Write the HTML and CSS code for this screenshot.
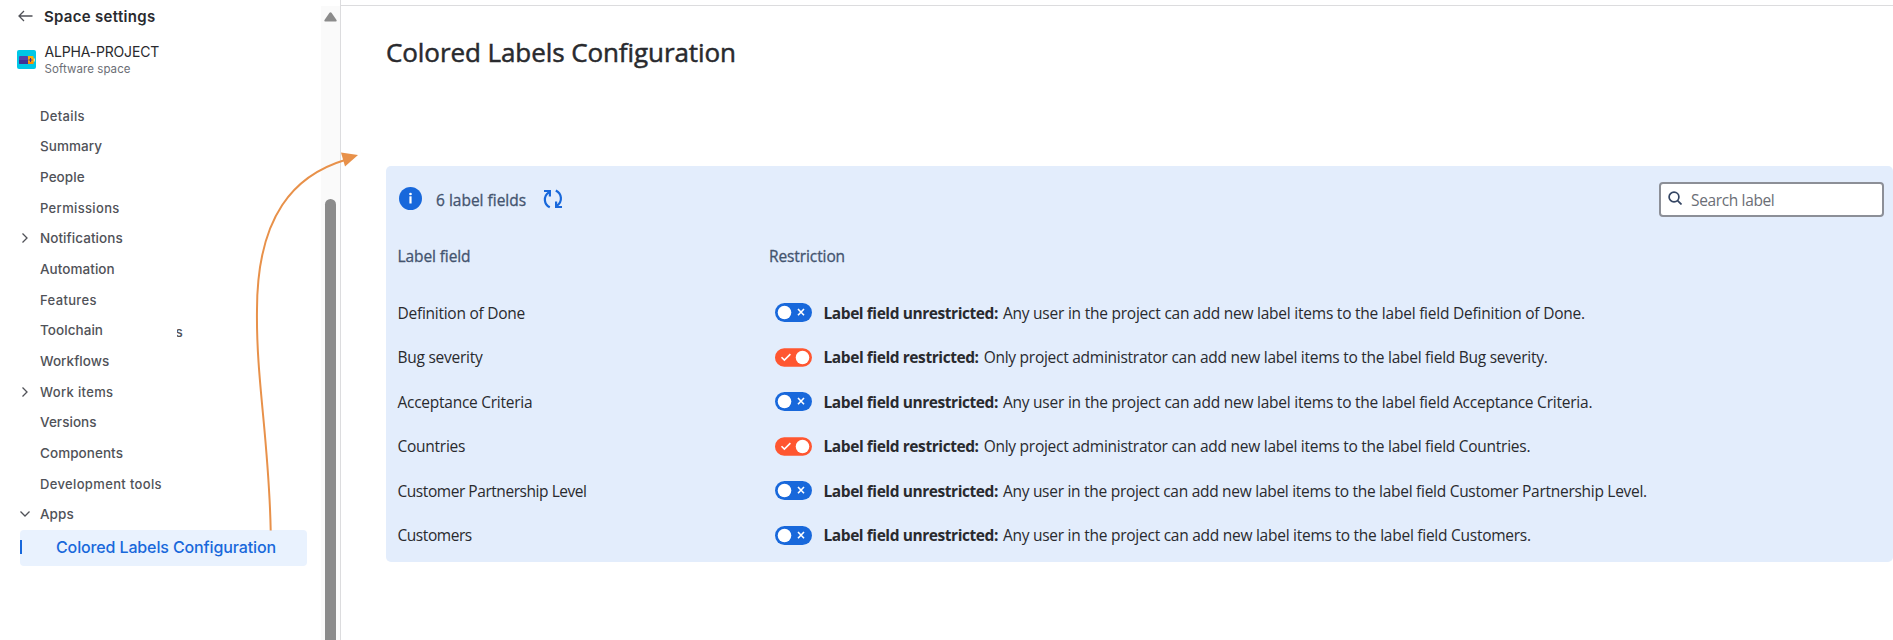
FILE: index.html
```html
<!DOCTYPE html>
<html lang="en">
<head>
<meta charset="utf-8">
<title>Colored Labels Configuration</title>
<link rel="stylesheet" href="styles.css">
</head>
<body>
<svg class="defs" width="0" height="0" aria-hidden="true">
  <symbol id="off" viewBox="0 0 37 19"><rect width="37" height="19" rx="9.5" fill="#1868db"/><circle cx="9.5" cy="9.5" r="6.8" fill="#fff"/><path d="M23 6l6 6.200M29 6l-6 6.200" stroke="#fff" stroke-width="1.600"/></symbol>
  <symbol id="on" viewBox="0 0 37 19"><rect y=".3" width="37" height="18.400" rx="9.200" fill="#ff5630"/><circle cx="27.500" cy="9.500" r="6.800" fill="#fff"/><path d="M6.500 9.200l2.900 2.900 6-6" fill="none" stroke="#fff" stroke-width="1.600"/></symbol>
  <symbol id="chev" viewBox="0 0 12 12"><path d="M3.500 1.500l4.500 4.500-4.500 4.500" fill="none" stroke="#505258" stroke-width="1.300"/></symbol>
</svg>
<div class="app">
  <aside class="sidebar">
    <div class="side">
      <div class="back">
        <svg width="15" height="12" viewBox="0 0 15 12"><path d="M14.500 6H1.200M6 1L1 6l5 5" fill="none" stroke="#505258" stroke-width="1.300"/></svg>
        <span>Space settings</span>
      </div>
      <div class="space">
        <svg width="19" height="19" viewBox="0 0 19 19"><rect width="19" height="19" rx="2" fill="#00c7e6"/><rect x="2" y="6" width="9" height="8" rx="1" fill="#5243aa"/><path d="M2 10h9v4H3q-1 0-1-1z" fill="#403294"/><path d="M11 6h4.500q1 0 1 1v1.500h.9v3h-.9V13q0 1-1 1H11z" fill="#ffab00"/><path d="M11 12h5.500v1q0 1-1 1H11z" fill="#ff8b00"/><path d="M17.300 8.500v3" stroke="#ffe8b0"/><path d="M13.500 8v4M11.500 10h4" stroke="#403294" stroke-width="1.100"/></svg>
        <div class="title"><div class="name">ALPHA-PROJECT</div><div class="kind">Software space</div></div>
      </div>
      <nav class="nav">
        <div class="item wide">Details</div>
        <div class="item">Summary</div>
        <div class="item">People</div>
        <div class="item wide">Permissions</div>
        <div class="item"><svg class="chev"><use href="#chev"/></svg>Notifications</div>
        <div class="item">Automation</div>
        <div class="item wide">Features</div>
        <div class="item">Toolchain<span class="stray"><span>s</span></span></div>
        <div class="item">Workflows</div>
        <div class="item wide"><svg class="chev"><use href="#chev"/></svg>Work items</div>
        <div class="item">Versions</div>
        <div class="item">Components</div>
        <div class="item wide">Development tools</div>
        <div class="item"><svg class="chev open"><use href="#chev"/></svg>Apps</div>
      </nav>
      <div class="selected"><span>Colored Labels Configuration</span></div>
    </div>
    <div class="scroll">
      <svg width="13" height="10" viewBox="0 0 13 10"><path d="M5.500 .8q1-1.200 2 0L12.500 8q.6 1.500-.6 1.500H1.100Q-.1 9.500.5 8z" fill="#8b8b8b"/></svg>
      <div class="thumb"></div>
    </div>
  </aside>
  <main class="main">
    <h1>Colored Labels Configuration</h1>
    <section class="panel">
      <div class="toolbar">
        <svg class="info" width="23" height="23" viewBox="0 0 23 23"><circle cx="11.500" cy="11.500" r="11.500" fill="#1868db"/><circle cx="11.500" cy="7" r="1.350" fill="#fff"/><path d="M11.500 9.300v7.200" stroke="#fff" stroke-width="2.200"/></svg>
        <span class="count">6 label fields</span>
        <svg class="sync" width="20" height="20" viewBox="0 0 20 20"><g fill="none" stroke="#1868db" stroke-width="2.200"><path d="M6.800 18.300C1 15.500 -.2 7.500 6 3.200M1 2h5.900v5.600"/><path d="M12.800 1.500C18.800 4.500 20 12.500 13.800 16.800M19 18h-5.900v-5.600"/></g></svg>
        <div class="search">
          <svg width="14" height="14" viewBox="0 0 14 14"><g fill="none" stroke="#344563" stroke-width="1.700"><circle cx="6" cy="6" r="4.900"/><path d="M9.600 9.600l3.900 3.900"/></g></svg>
          <span>Search label</span>
        </div>
      </div>
      <div class="row head"><div>Label field</div><div class="restr">Restriction</div></div>
      <div class="row"><div>Definition of Done</div><svg class="toggle"><use href="#off"/></svg><p><b>Label field unrestricted:</b><span class="t-dod">Any user in the project can add new label items to the label field Definition of Done.</span></p></div>
      <div class="row"><div>Bug severity</div><svg class="toggle"><use href="#on"/></svg><p><b class="short">Label field restricted:</b><span>Only project administrator can add new label items to the label field Bug severity.</span></p></div>
      <div class="row"><div>Acceptance Criteria</div><svg class="toggle"><use href="#off"/></svg><p><b>Label field unrestricted:</b><span class="t-dod">Any user in the project can add new label items to the label field Acceptance Criteria.</span></p></div>
      <div class="row"><div>Countries</div><svg class="toggle"><use href="#on"/></svg><p><b class="short">Label field restricted:</b><span>Only project administrator can add new label items to the label field Countries.</span></p></div>
      <div class="row"><div class="tight">Customer Partnership Level</div><svg class="toggle"><use href="#off"/></svg><p><b>Label field unrestricted:</b><span class="t-cpl">Any user in the project can add new label items to the label field Customer Partnership Level.</span></p></div>
      <div class="row"><div class="tight">Customers</div><svg class="toggle"><use href="#off"/></svg><p><b>Label field unrestricted:</b><span>Any user in the project can add new label items to the label field Customers.</span></p></div>
    </section>
  </main>
  <svg class="arrow" width="380" height="640" viewBox="0 0 380 640"><path d="M270.700 530.500C269 440 256 380 257 310C257 215 295 175 345 160" fill="none" stroke="#e8914a" stroke-width="2"/><path d="M341 152.500L358 155L345 166.500z" fill="#e8914a"/></svg>
</div>
</body>
</html>
```
FILE: styles.css
```css
* { box-sizing: border-box; }
body { margin: 0; background: #fff; font-family: "Open Sans", sans-serif; font-size: 15.5px; color: #292a2e; }
svg { display: block; flex: none; }
.defs { position: absolute; }
.app { position: relative; display: flex; width: 1893px; height: 640px; overflow: hidden; }
.arrow { position: absolute; left: 0; top: 0; }

.sidebar { display: flex; width: 341px; border-right: 1px solid #dcdcde; font-family: Inter, sans-serif; font-weight: 500; }
.side { width: 321px; }
.back { display: flex; align-items: center; height: 32px; padding-left: 17.5px; gap: 11.5px; font-size: 15px; font-weight: 600; letter-spacing: .3px; }
.space { display: flex; align-items: center; height: 54px; padding-left: 17px; gap: 8.5px; }
.title { padding-top: 2px; }
.name { font-size: 14px; font-weight: 400; line-height: 18px; letter-spacing: -.18px; }
.kind { font-size: 11.5px; font-weight: 400; line-height: 16px; letter-spacing: .08px; color: #6b6e76; }
.nav { padding-top: 14.5px; }
.item { display: flex; align-items: center; position: relative; height: 30.65px; padding-left: 40px; font-size: 13.5px; letter-spacing: .05px; color: #505258; }
.wide { font-size: 13px; letter-spacing: .35px; }
.chev { position: absolute; left: 19px; width: 12px; height: 12px; }
.open { transform: rotate(90deg); }
.stray { width: 6px; margin: 3px 0 0 73.5px; overflow: hidden; }
.stray span { display: block; margin-left: -1px; }
.selected { display: flex; align-items: center; width: 287px; height: 36px; margin: .4px 0 0 20px; padding-bottom: 1px; border-radius: 4px; background: #e9f2fe; color: #1868db; font-size: 16px; letter-spacing: -.13px; }
.selected::before { content: ""; width: 2px; height: 14px; margin-right: 34px; background: #1868db; }
.scroll { display: flex; flex-direction: column; align-items: center; width: 19px; margin-top: 6px; padding-top: 6px; background: #fafafa; }
.thumb { width: 11px; flex: 1; margin-top: 177px; border-radius: 6px 6px 0 0; background: #8b8b8b; }

.main { width: 1552px; margin-top: 5px; padding-left: 45px; border-top: 1px solid #dcdcde; }
h1 { margin: 26px 0 0; height: 134px; font-size: 26px; line-height: 40px; font-weight: 400; letter-spacing: -.08px; -webkit-text-stroke: .5px currentColor; }
.panel { height: 396px; padding: 16px 9px 0 11.5px; border-radius: 5px; background: #e3edfc; }
.toolbar { display: flex; align-items: center; height: 35px; padding-left: 1.5px; }
.info { margin-top: -2px; }
.count { margin-left: 14px; color: #44546f; -webkit-text-stroke: .3px currentColor; }
.sync { margin: -2px 0 0 16.5px; }
.search { display: flex; align-items: center; width: 225px; height: 35px; margin-left: auto; padding-left: 7px; gap: 9px; border: 2px solid #8c8f97; border-radius: 4px; background: #fff; color: #6b6e76; letter-spacing: -.36px; }
.search svg { margin-top: -4px; }
.row { display: grid; grid-template-columns: 377.5px 37px 1fr; align-items: center; height: 44.5px; letter-spacing: -.26px; }
.head { height: 73.5px; padding-top: 4px; color: #44546f; letter-spacing: -.1px; grid-template-columns: 371.5px 1fr; -webkit-text-stroke: .3px currentColor; }
.toggle { width: 37px; height: 19px; }
.row p { display: flex; gap: 5px; margin: 0 0 0 11.5px; white-space: nowrap; }
b { letter-spacing: -.43px; }
.short { letter-spacing: -.42px; }
.t-dod { letter-spacing: -.23px; }
.t-cpl { letter-spacing: -.28px; }
.tight { letter-spacing: -.45px; }
```
